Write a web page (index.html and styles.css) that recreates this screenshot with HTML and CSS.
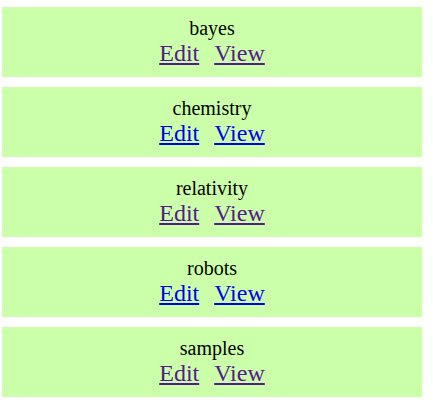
FILE: index.html
```html
<!DOCTYPE html>
<html>
<head>
<meta charset="utf-8">
<link rel="stylesheet" href="styles.css">
</head>
<body>
<div class="list">
  <div class="card">
    <div class="title">bayes</div>
    <div class="links"><a class="link visited" href="#">Edit</a><a class="link visited" href="#">View</a></div>
  </div>
  <div class="card">
    <div class="title">chemistry</div>
    <div class="links"><a class="link" href="#">Edit</a><a class="link" href="#">View</a></div>
  </div>
  <div class="card">
    <div class="title">relativity</div>
    <div class="links"><a class="link visited" href="#">Edit</a><a class="link visited" href="#">View</a></div>
  </div>
  <div class="card">
    <div class="title">robots</div>
    <div class="links"><a class="link" href="#">Edit</a><a class="link" href="#">View</a></div>
  </div>
  <div class="card">
    <div class="title">samples</div>
    <div class="links"><a class="link visited" href="#">Edit</a><a class="link visited" href="#">View</a></div>
  </div>
</div>
</body>
</html>
```
FILE: styles.css
```css
html, body {
  margin: 0;
  padding: 0;
  background: #ffffff;
}
body {
  font-family: "Liberation Serif", "Times New Roman", serif;
  color: #000000;
}
.list {
  display: flex;
  flex-direction: column;
  gap: 10px;
  padding: 7px 0 0 2px;
  width: 420px;
}
.card {
  box-sizing: border-box;
  height: 70px;
  background: #ccffaa;
  padding-top: 10px;
  text-align: center;
}
.title {
  font-size: 20px;
  line-height: 23px;
}
.links {
  font-size: 24px;
  line-height: 27px;
  display: flex;
  justify-content: center;
  gap: 15px;
}
.link {
  color: #0000ee;
  text-decoration: underline;
}
.link.visited {
  color: #551a8b;
}
```
